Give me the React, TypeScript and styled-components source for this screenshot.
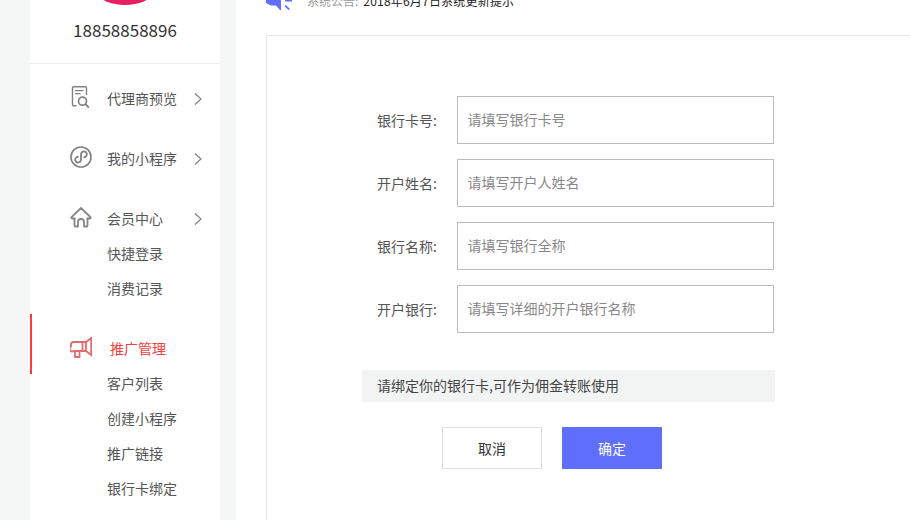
import React from 'react'
import styled, { createGlobalStyle } from 'styled-components'

const GlobalStyle = createGlobalStyle`
    html, body {
        margin: 0;
        padding: 0;
        height: 520px;
        overflow: hidden;
        background: #fff;
        font-family: "Noto Sans CJK SC", "Liberation Sans", sans-serif;
    }
`

const ReportIcon = () => (
    <svg width="22" height="24" viewBox="0 0 22 24" fill="none" stroke="#808080" strokeWidth="1.4">
        <path d="M6.500 20.700H3.500a1 1 0 0 1-1-1V2.700a1 1 0 0 1 1-1h12a1 1 0 0 1 1 1V10" />
        <path d="M5 5.700h8.500M5 8.700h5.500" strokeWidth="1.300" />
        <circle cx="12.500" cy="16.200" r="4" strokeWidth="1.700" />
        <path d="M15.500 19.200l3.300 3.300" strokeWidth="1.800" />
    </svg>
)

const MiniAppIcon = () => (
    <svg width="22" height="22" viewBox="0 0 22 22" fill="none" stroke="#808080" strokeWidth="1.600">
        <circle cx="11" cy="11" r="10" />
        <path d="M8.500 10.800A2.900 2.900 0 1 0 11 13.600V8.400a2.900 2.900 0 1 1 2.500 2.800" strokeWidth="1.800" />
    </svg>
)

const HomeIcon = () => (
    <svg width="22" height="21" viewBox="0 0 22 21" fill="none" stroke="#868686" strokeWidth="1.800" strokeLinejoin="round" strokeLinecap="round">
        <path d="M4.500 11.500H2a.8.8 0 0 1-.5-1.400L11 1l9.500 9.100a.8.8 0 0 1-.5 1.400h-2.500" />
        <path d="M4.500 11.500v7a1 1 0 0 0 1 1H8v-4.500a3 3 0 0 1 6 0v4.500h2.500a1 1 0 0 0 1-1v-7" />
    </svg>
)

const HornIcon = () => (
    <svg width="22" height="22" viewBox="0 0 22 22" fill="none" stroke="#e36a6e" strokeWidth="1.800">
        <path d="M16 6H3.500A2.500 2.500 0 0 0 1 8.500v2A2.500 2.500 0 0 0 3.500 15H16z" />
        <path d="M16 6l5.200-4v17L16 15M12.500 6v9" />
        <path d="M5 15v6h4.500v-6" />
    </svg>
)

const Chevron = () => (
    <svg width="8" height="12" viewBox="0 0 8 12" fill="none" stroke="#808080" strokeWidth="1.200">
        <path d="M1 .5L7 6l-6 5.500" />
    </svg>
)

const SpeakerIcon = () => (
    <svg width="26" height="11" viewBox="0 0 26 11" fill="#5f6ffb">
        <path d="M0 0v3l5 2.500h5L14 10h1V0z" />
        <path d="M19 0h7v1.500h-7zM19.800 5L24 9l-1.500 1-4-4z" />
    </svg>
)

type MenuItem = { icon: React.ReactNode; label: string; children?: string[]; active?: boolean; arrow?: boolean }

const menu: MenuItem[] = [
    { icon: <ReportIcon />, label: '代理商预览', arrow: true },
    { icon: <MiniAppIcon />, label: '我的小程序', arrow: true },
    { icon: <HomeIcon />, label: '会员中心', arrow: true, children: ['快捷登录', '消费记录'] },
    { icon: <HornIcon />, label: '推广管理', active: true, children: ['客户列表', '创建小程序', '推广链接', '银行卡绑定'] },
]

const fields = [
    { label: '银行卡号:', hint: '请填写银行卡号' },
    { label: '开户姓名:', hint: '请填写开户人姓名' },
    { label: '银行名称:', hint: '请填写银行全称' },
    { label: '开户银行:', hint: '请填写详细的开户银行名称' },
]

const App = () => {
    return (
        <Page>
            <GlobalStyle />
            <Sidebar>
                <Avatar />
                <Phone>18858858896</Phone>
                <Menu>
                    {menu.map(item => (
                        <div key={item.label}>
                            <Row $active={item.active}>
                                <IconSlot>{item.icon}</IconSlot>
                                <RowLabel $active={item.active}>{item.label}</RowLabel>
                                {item.arrow && <ArrowSlot><Chevron /></ArrowSlot>}
                            </Row>
                            {item.children && (
                                <SubList>
                                    {item.children.map(c => <SubItem key={c}>{c}</SubItem>)}
                                </SubList>
                            )}
                        </div>
                    ))}
                </Menu>
            </Sidebar>
            <Gutter />
            <Main>
                <Notice>
                    <SpeakerIcon />
                    <NoticeText><NoticeLabel>系统公告:</NoticeLabel>2018年6月7日系统更新提示</NoticeText>
                </Notice>
                <Panel>
                    <Form>
                        {fields.map(f => (
                            <Field key={f.label}>
                                <FieldLabel>{f.label}</FieldLabel>
                                <Input placeholder={f.hint} />
                            </Field>
                        ))}
                    </Form>
                    <Tip>请绑定你的银行卡,可作为佣金转账使用</Tip>
                    <Buttons>
                        <CancelButton>取消</CancelButton>
                        <ConfirmButton>确定</ConfirmButton>
                    </Buttons>
                </Panel>
            </Main>
        </Page>
    )
}

const Page = styled.div`
    display: flex;
    width: 910px;
    height: 520px;
    overflow: hidden;
    padding-left: 30px;
    box-sizing: border-box;
    background: #f5f7f6;
`

const Sidebar = styled.div`
    width: 190px;
    flex-shrink: 0;
    background: #fff;
    display: flex;
    flex-direction: column;
    align-items: stretch;
`

const Avatar = styled.div`
    width: 100px;
    height: 100px;
    flex-shrink: 0;
    margin: -95px auto 0;
    border-radius: 50%;
    background: #e91e63;
`

const Phone = styled.div`
    margin-top: 13px;
    height: 25px;
    line-height: 24px;
    text-align: center;
    font-size: 17px;
    color: #333;
    padding-bottom: 20px;
    border-bottom: 1px solid #eee;
`

const Menu = styled.div`
    display: flex;
    flex-direction: column;
`

const Row = styled.div<{ $active?: boolean }>`
    position: relative;
    height: 50px;
    padding: 10px 0 0 40px;
    display: flex;
    align-items: center;
    &::before {
        content: "";
        display: ${p => (p.$active ? 'block' : 'none')};
        position: absolute;
        left: 0;
        top: 0;
        width: 2px;
        height: 60px;
        background: #f73d3d;
    }
`

const IconSlot = styled.div`
    width: 22px;
    height: 24px;
    margin-top: -4px;
    display: flex;
    align-items: center;
    justify-content: center;
`

const RowLabel = styled.span<{ $active?: boolean }>`
    font-size: 14px;
    margin-top: -2px;
    margin-left: ${p => (p.$active ? '18px' : '15px')};
    color: ${p => (p.$active ? '#f73d3d' : '#555')};
`

const ArrowSlot = styled.div`
    margin-left: auto;
    margin-right: 18px;
    display: flex;
`

const SubList = styled.div`
    margin: -7px 0 7px;
`

const SubItem = styled.div`
    height: 35px;
    line-height: 33px;
    padding-left: 77px;
    font-size: 14px;
    color: #555;
`

const Gutter = styled.div`
    width: 16px;
    flex-shrink: 0;
`

const Main = styled.div`
    flex: 1;
    background: #fff;
    padding-left: 30px;
    min-width: 0;
`

const Notice = styled.div`
    height: 35px;
    display: flex;
    align-items: flex-start;
    svg {
        flex-shrink: 0;
    }
`

const NoticeText = styled.div`
    margin: -8px 0 0 15px;
    font-size: 12px;
    line-height: 18px;
    letter-spacing: 0.2px;
    color: #222;
`

const NoticeLabel = styled.span`
    color: #999;
    letter-spacing: 0;
    margin-right: 5px;
`

const Panel = styled.div`
    border: 1px solid #e8e8e8;
    border-right: none;
    height: 520px;
    padding: 60px 0 0 95px;
`

const Form = styled.div`
    display: flex;
    flex-direction: column;
    gap: 15px;
    width: 413px;
`

const Field = styled.div`
    display: flex;
    align-items: center;
    justify-content: flex-end;
    gap: 20px;
    padding-right: 1px;
`

const FieldLabel = styled.label`
    font-size: 14px;
    color: #555;
`

const Input = styled.input`
    width: 317px;
    height: 48px;
    box-sizing: border-box;
    border: 1px solid #bbb;
    padding: 0 9.5px 2px;
    outline: none;
    font-family: inherit;
    font-size: 14px;
    &::placeholder {
        color: #888;
        opacity: 1;
    }
`

const Tip = styled.div`
    width: 413px;
    height: 32px;
    line-height: 31px;
    margin-top: 37px;
    padding-left: 15px;
    box-sizing: border-box;
    background: #f2f4f4;
    font-size: 14px;
    color: #444;
`

const Buttons = styled.div`
    display: flex;
    gap: 20px;
    margin: 25px 0 0 80px;
`

const CancelButton = styled.button`
    width: 100px;
    height: 42px;
    box-sizing: border-box;
    background: #fff;
    border: 1px solid #ddd;
    font-family: inherit;
    font-size: 14px;
    color: #333;
    padding: 0;
`

const ConfirmButton = styled(CancelButton)`
    background: #5f6ffb;
    border-color: #5f6ffb;
    color: #fff;
`

export default App
